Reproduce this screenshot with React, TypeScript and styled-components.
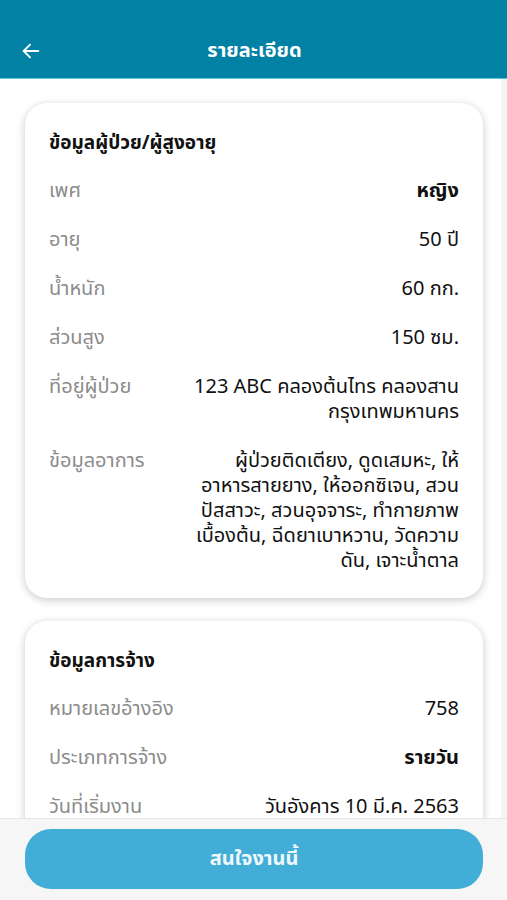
import styled, { createGlobalStyle } from 'styled-components'

const GlobalStyle = createGlobalStyle`
  html, body {
    margin: 0;
    padding: 0;
    background: #ffffff;
  }
  body {
    font-family: 'Noto Sans Thai', 'Noto Sans', 'DejaVu Sans', sans-serif;
  }
`

type Row = { label: string; value: string; bold?: boolean }

// line breaks follow the app's wrapping
const patientRows: Row[] = [
  { label: 'เพศ', value: 'หญิง', bold: true },
  { label: 'อายุ', value: '50 ปี' },
  { label: 'น้ำหนัก', value: '60 กก.' },
  { label: 'ส่วนสูง', value: '150 ซม.' },
  { label: 'ที่อยู่ผู้ป่วย', value: '123 ABC คลองต้นไทร คลองสาน\nกรุงเทพมหานคร' },
  {
    label: 'ข้อมูลอาการ',
    value:
      'ผู้ป่วยติดเตียง, ดูดเสมหะ, ให้\nอาหารสายยาง, ให้ออกซิเจน, สวน\nปัสสาวะ, สวนอุจจาระ, ทำกายภาพ\nเบื้องต้น, ฉีดยาเบาหวาน, วัดความ\nดัน, เจาะน้ำตาล',
  },
]

const jobRows: Row[] = [
  { label: 'หมายเลขอ้างอิง', value: '758' },
  { label: 'ประเภทการจ้าง', value: 'รายวัน', bold: true },
  { label: 'วันที่เริ่มงาน', value: 'วันอังคาร 10 มี.ค. 2563' },
]

function BackArrow() {
  return (
    <svg width="22" height="22" viewBox="0 0 24 24" fill="none" stroke="#fff" strokeWidth="2" strokeLinecap="round" strokeLinejoin="round">
      <path d="M20 12H4" />
      <path d="M11 5l-7 7 7 7" />
    </svg>
  )
}

function InfoCard({ title, rows }: { title: string; rows: Row[] }) {
  return (
    <Card>
      <CardTitle>{title}</CardTitle>
      {rows.map((r) => (
        <InfoRow key={r.label}>
          <Label>{r.label}</Label>
          <Value $bold={r.bold}>{r.value}</Value>
        </InfoRow>
      ))}
    </Card>
  )
}

export default function App() {
  return (
    <Screen>
      <GlobalStyle />
      <Header>
        <BackButton>
          <BackArrow />
        </BackButton>
        <Title>รายละเอียด</Title>
        <HeaderSpacer />
      </Header>
      <Content>
        <InfoCard title="ข้อมูลผู้ป่วย/ผู้สูงอายุ" rows={patientRows} />
        <InfoCard title="ข้อมูลการจ้าง" rows={jobRows} />
      </Content>
      <Footer>
        <ActionButton>สนใจงานนี้</ActionButton>
      </Footer>
    </Screen>
  )
}

const Screen = styled.div`
  display: flex;
  flex-direction: column;
  height: 900px;
  overflow: hidden;
  background: #ffffff;
`

const Header = styled.div`
  display: flex;
  align-items: flex-end;
  justify-content: space-between;
  height: 79px;
  padding: 0 18px 13px;
  box-sizing: border-box;
  background: #0181a4;
  border-bottom: 1px solid #5cc2de;
  flex-shrink: 0;
`

const BackButton = styled.div`
  width: 40px;
  display: flex;
  align-items: center;
  padding-left: 2px;
  height: 28px;
`

const HeaderSpacer = styled.div`
  width: 40px;
`

const Title = styled.div`
  color: #ffffff;
  font-size: 20px;
  font-weight: 700;
  line-height: 28px;
`

const Content = styled.div`
  flex: 1;
  overflow: hidden;
  display: flex;
  flex-direction: column;
  gap: 23px;
  padding: 24px 18px 0 25px;
  border-right: 6px solid #f4f4f4;
`

const Card = styled.div`
  background: #ffffff;
  border-radius: 22px;
  box-shadow: 0 2px 8px rgba(0, 0, 0, 0.22);
  padding: 26px 24px 24px;
  display: flex;
  flex-direction: column;
  flex-shrink: 0;
`

const CardTitle = styled.div`
  font-size: 19px;
  font-weight: 700;
  color: #111;
  line-height: 30px;
  margin-bottom: 20px;
`

const InfoRow = styled.div`
  display: flex;
  justify-content: space-between;
  align-items: flex-start;
  gap: 20px;
  line-height: 25px;
  font-size: 20px;
  & + & {
    margin-top: 24px;
  }
`

const Label = styled.div`
  color: #8c8c8c;
  white-space: nowrap;
`

const Value = styled.div<{ $bold?: boolean }>`
  color: #111;
  text-align: right;
  white-space: pre-line;
  font-weight: ${(p) => (p.$bold ? 700 : 400)};
`

const Footer = styled.div`
  height: 82px;
  flex-shrink: 0;
  background: #f6f6f6;
  border-top: 1px solid #e6e6e6;
  padding: 10px 24px 0 25px;
  box-sizing: border-box;
`

const ActionButton = styled.button`
  width: 100%;
  height: 60px;
  border: none;
  border-radius: 26px;
  background: #42add6;
  color: #eef8fc;
  font-family: inherit;
  font-size: 20px;
  font-weight: 700;
`
